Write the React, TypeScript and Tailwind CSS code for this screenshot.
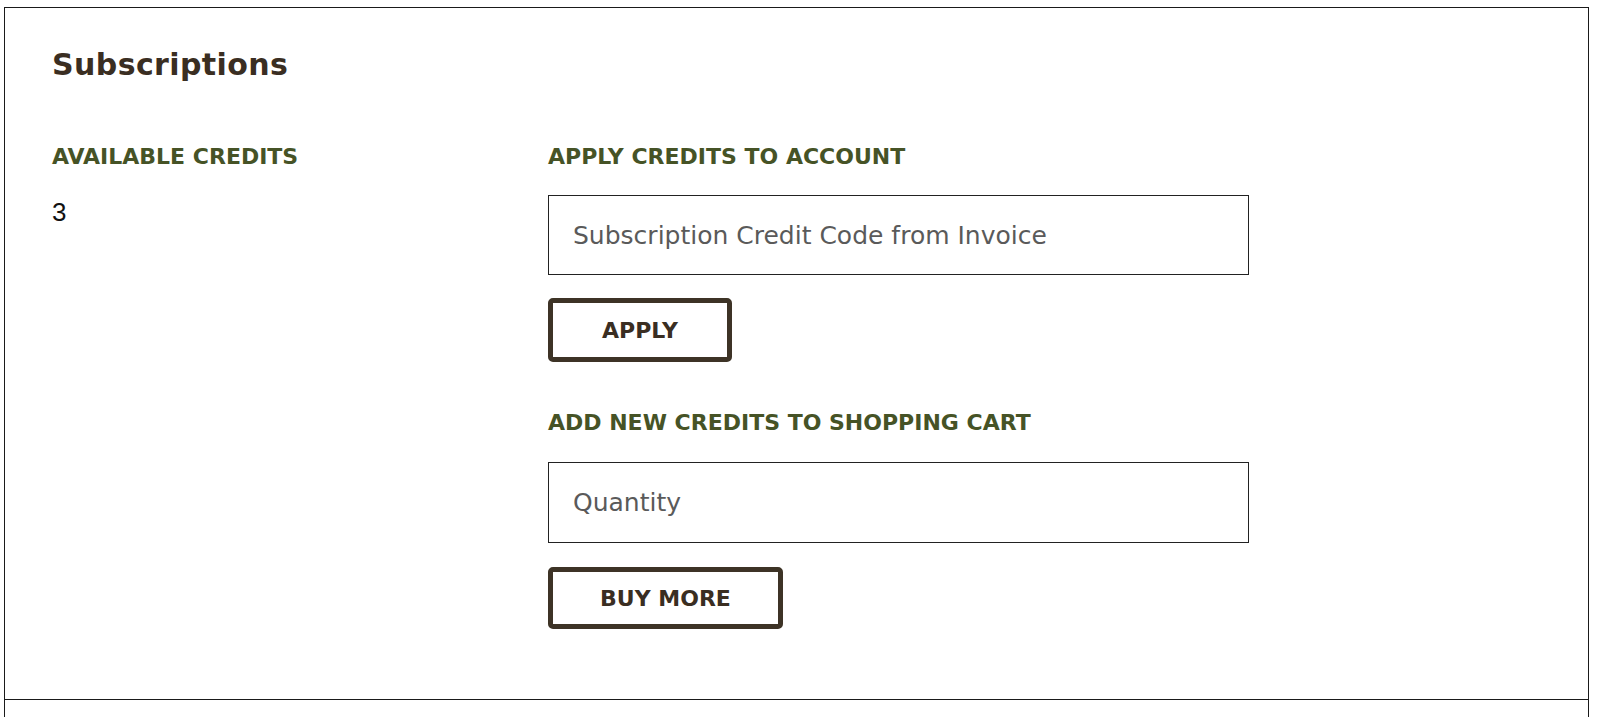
export default function App() {
  const font = { fontFamily: "'DejaVu Sans', 'Liberation Sans', sans-serif" };

  return (
    <div className="min-h-screen bg-white pl-[4px] pr-[11px] pt-[7px]" style={font}>
      <div className="border border-[#1a1a1a] pl-[47px] pr-8 pt-[40px] pb-[70px]">
        <h2 className="text-[30px] leading-[34px] font-bold tracking-[0.4px] text-[#3a2e22]">Subscriptions</h2>

        <div className="mt-[62px] grid grid-cols-[496px_1fr]">
          {/* Left column */}
          <div>
            <h3 className="text-[22px] leading-[26px] font-bold uppercase text-[#465326]">
              Available Credits
            </h3>
            <p
              className="mt-[28px] text-[26px] leading-[28px] text-[#111]"
              style={{ fontFamily: "'Liberation Sans', Arial, sans-serif" }}
            >
              3
            </p>
          </div>

          {/* Right column */}
          <div className="flex flex-col items-start">
            <h3 className="text-[22px] leading-[26px] font-bold uppercase text-[#465326]">
              Apply credits to account
            </h3>
            <input
              type="text"
              placeholder="Subscription Credit Code from Invoice"
              className="mt-[25px] h-[80px] w-[701px] border border-[#222] bg-white px-[24px] text-[25px] text-[#333] placeholder:text-[#5a5a5a] outline-none"
            />
            <button className="mt-[23px] h-[64px] w-[184px] rounded-[5px] border-[5px] border-[#3d3326] bg-white text-[22px] font-bold uppercase text-[#3a2e22]">
              Apply
            </button>

            <h3 className="mt-[48px] text-[22px] leading-[26px] font-bold uppercase text-[#465326]">
              Add new credits to shopping cart
            </h3>
            <input
              type="text"
              placeholder="Quantity"
              className="mt-[26px] h-[81px] w-[701px] border border-[#222] bg-white px-[24px] text-[25px] text-[#333] placeholder:text-[#5a5a5a] outline-none"
            />
            <button className="mt-[24px] h-[62px] w-[235px] rounded-[5px] border-[5px] border-[#3d3326] bg-white text-[22px] font-bold uppercase text-[#3a2e22]">
              Buy more
            </button>
          </div>
        </div>
      </div>
      <div className="h-[40px] border-x border-[#1a1a1a]" />
    </div>
  );
}
